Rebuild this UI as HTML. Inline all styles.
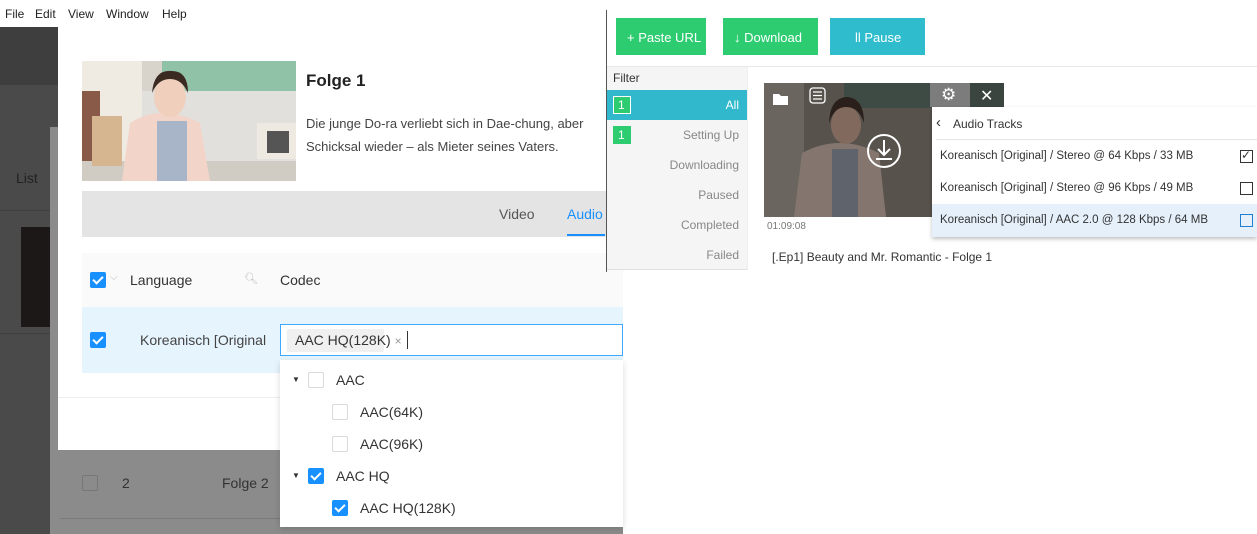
<!DOCTYPE html>
<html><head><meta charset="utf-8"><style>
*{margin:0;padding:0;box-sizing:border-box}
body{width:1257px;height:534px;overflow:hidden;position:relative;background:#fff;font-family:"Liberation Sans",sans-serif;color:#333}
.a{position:absolute}
.t{position:absolute;white-space:nowrap}
.cb{position:absolute;width:16px;height:16px;border-radius:2px;background:#1890ff}
.cb:after{content:"";position:absolute;left:5px;top:2px;width:4px;height:8px;border:solid #fff;border-width:0 2px 2px 0;transform:rotate(45deg)}
.ce{position:absolute;width:16px;height:16px;border:1px solid #d9d9d9;border-radius:2px;background:#fff}
</style></head><body>
<div class="a" style="left:0;top:0;width:606px;height:27px;background:#fff"></div>
<div class="t" style="left:5px;top:7px;font-size:12px;color:#222">File</div>
<div class="t" style="left:35px;top:7px;font-size:12px;color:#222">Edit</div>
<div class="t" style="left:68px;top:7px;font-size:12px;color:#222">View</div>
<div class="t" style="left:106px;top:7px;font-size:12px;color:#222">Window</div>
<div class="t" style="left:162px;top:7px;font-size:12px;color:#222">Help</div>
<div class="a" style="left:0;top:27px;width:606px;height:58px;background:#3e3e3e"></div>
<div class="a" style="left:0;top:85px;width:606px;height:449px;background:#4a4a4a"></div>
<div class="a" style="left:0;top:210px;width:50px;height:1px;background:#3f3f3f"></div>
<div class="a" style="left:0;top:333px;width:50px;height:1px;background:#3f3f3f"></div>
<div class="t" style="left:16px;top:170px;font-size:14px;color:#222">List</div>
<div class="a" style="left:21px;top:227px;width:29px;height:100px;background:#1c1818"></div>
<div class="a" style="left:50px;top:127px;width:573px;height:407px;background:#8b8b8b"></div>
<div class="ce" style="left:82px;top:475px;background:#8b8b8b;border-color:#777"></div>
<div class="t" style="left:122px;top:475px;font-size:14px;color:#333">2</div>
<div class="t" style="left:222px;top:475px;font-size:14px;color:#333">Folge 2</div>
<div class="a" style="left:60px;top:518px;width:563px;height:1px;background:#7a7a7a"></div>
<div class="a" style="left:58px;top:27px;width:548px;height:423px;background:#fff"></div>
<svg class="a" style="left:82px;top:61px" width="214" height="120" viewBox="0 0 214 120">
<rect width="214" height="120" fill="#d8d4cc"/>
<rect x="0" y="0" width="60" height="120" fill="#efebe3"/>
<rect x="0" y="30" width="18" height="90" fill="#8a5a48"/>
<rect x="80" y="0" width="134" height="30" fill="#8fc2a6"/>
<rect x="60" y="30" width="154" height="70" fill="#e2e0dc"/>
<rect x="175" y="62" width="40" height="36" fill="#eeeae2"/>
<rect x="185" y="70" width="22" height="22" fill="#555"/>
<rect x="0" y="100" width="214" height="20" fill="#d0ccc4"/>
<rect x="10" y="55" width="30" height="50" fill="#d6b690"/>
<path d="M40 120 L48 62 Q80 42 118 62 L128 120Z" fill="#f2d4c8"/>
<rect x="75" y="60" width="30" height="60" fill="#a8b4c8"/>
<ellipse cx="88" cy="36" rx="16" ry="20" fill="#f0d0bc"/>
<path d="M70 32 Q72 8 90 10 Q106 10 106 32 Q100 18 88 18 Q76 18 70 32Z" fill="#3a2a22"/>
</svg>
<div class="t" style="left:306px;top:71px;font-size:17px;font-weight:bold;color:#222">Folge 1</div>
<div class="t" style="left:306px;top:112px;font-size:13px;color:#444;line-height:23px">Die junge Do-ra verliebt sich in Dae-chung, aber<br>Schicksal wieder – als Mieter seines Vaters.</div>
<div class="a" style="left:82px;top:191px;width:524px;height:46px;background:#e4e4e4"></div>
<div class="t" style="left:499px;top:206px;font-size:14px;color:#555">Video</div>
<div class="t" style="left:567px;top:206px;font-size:14px;color:#1890ff">Audio</div>
<div class="a" style="left:567px;top:234px;width:38px;height:2px;background:#1890ff"></div>
<div class="a" style="left:82px;top:253px;width:541px;height:54px;background:#fafafa"></div>
<div class="cb" style="left:90px;top:272px"></div>
<div class="t" style="left:110px;top:272px;font-size:10px;color:#bbb">⌵</div>
<div class="t" style="left:130px;top:272px;font-size:14px;color:#333">Language</div>
<div class="t" style="left:244px;top:272px;font-size:11px;color:#bbb">🔍︎</div>
<div class="t" style="left:280px;top:272px;font-size:14px;color:#333">Codec</div>
<div class="a" style="left:82px;top:307px;width:541px;height:66px;background:#e6f4fd"></div>
<div class="cb" style="left:90px;top:332px"></div>
<div class="t" style="left:140px;top:332px;font-size:14px;color:#444">Koreanisch [Original</div>
<div class="a" style="left:280px;top:324px;width:343px;height:32px;border:1px solid #40a9ff;background:#fff"></div>
<div class="a" style="left:287px;top:329px;width:97px;height:23px;background:#f0f0f0;border-radius:2px"></div>
<div class="t" style="left:295px;top:332px;font-size:14px;color:#333">AAC HQ(128K) <span style="color:#999;font-size:12px">×</span></div>
<div class="a" style="left:407px;top:331px;width:1px;height:18px;background:#333"></div>
<div class="a" style="left:58px;top:397px;width:548px;height:1px;background:#eee"></div>
<div class="a" style="left:280px;top:360px;width:343px;height:167px;background:#fff;box-shadow:0 2px 6px rgba(0,0,0,.15)"></div>
<div class="t" style="left:292px;top:375px;font-size:8px;color:#333">▼</div>
<div class="ce" style="left:308px;top:372px"></div>
<div class="t" style="left:336px;top:372px;font-size:14px;color:#333">AAC</div>
<div class="ce" style="left:332px;top:404px"></div>
<div class="t" style="left:360px;top:404px;font-size:14px;color:#333">AAC(64K)</div>
<div class="ce" style="left:332px;top:436px"></div>
<div class="t" style="left:360px;top:436px;font-size:14px;color:#333">AAC(96K)</div>
<div class="t" style="left:292px;top:471px;font-size:8px;color:#333">▼</div>
<div class="cb" style="left:308px;top:468px"></div>
<div class="t" style="left:336px;top:468px;font-size:14px;color:#333">AAC HQ</div>
<div class="cb" style="left:332px;top:500px"></div>
<div class="t" style="left:360px;top:500px;font-size:14px;color:#333">AAC HQ(128K)</div>
<div class="a" style="left:606px;top:10px;width:1px;height:262px;background:#555"></div>
<div class="a" style="left:616px;top:18px;width:90px;height:37px;background:#2ecc71"></div>
<div class="t" style="left:627px;top:30px;font-size:13px;color:#fff">+ Paste URL</div>
<div class="a" style="left:723px;top:18px;width:95px;height:37px;background:#2ecc71"></div>
<div class="t" style="left:734px;top:30px;font-size:13px;color:#fff">↓ Download</div>
<div class="a" style="left:830px;top:18px;width:95px;height:37px;background:#2fbccd"></div>
<div class="t" style="left:855px;top:30px;font-size:13px;color:#fff">ll Pause</div>
<div class="a" style="left:607px;top:66px;width:650px;height:1px;background:#e8e8e8"></div>
<div class="a" style="left:607px;top:67px;width:140px;height:203px;background:#f5f5f5;border-bottom:1px solid #e0e0e0"></div>
<div class="a" style="left:747px;top:67px;width:1px;height:203px;background:#eee"></div>
<div class="t" style="left:613px;top:71px;font-size:12px;color:#333">Filter</div>
<div class="a" style="left:607px;top:90px;width:140px;height:30px;background:#31b8cc"></div>
<div class="a" style="left:613px;top:96px;width:18px;height:18px;background:#2ecc71;border:1px solid #fff"></div>
<div class="t" style="left:618px;top:98px;font-size:12px;color:#fff">1</div>
<div class="t" style="right:518px;top:98px;font-size:12px;color:#fff">All</div>
<div class="a" style="left:613px;top:126px;width:18px;height:18px;background:#2ecc71"></div>
<div class="t" style="left:618px;top:128px;font-size:12px;color:#fff">1</div>
<div class="t" style="right:518px;top:128px;font-size:12px;color:#888">Setting Up</div>
<div class="t" style="right:518px;top:158px;font-size:12px;color:#888">Downloading</div>
<div class="t" style="right:518px;top:188px;font-size:12px;color:#888">Paused</div>
<div class="t" style="right:518px;top:218px;font-size:12px;color:#888">Completed</div>
<div class="t" style="right:518px;top:248px;font-size:12px;color:#888">Failed</div>
<svg class="a" style="left:764px;top:83px" width="168" height="134" viewBox="0 0 168 134">
<rect width="168" height="134" fill="#57524c"/>
<rect x="0" y="0" width="40" height="134" fill="#6a655e"/>
<rect x="80" y="0" width="88" height="25" fill="#3e4a44"/>
<path d="M30 134 L38 70 Q75 50 115 70 L122 134Z" fill="#84766f"/>
<rect x="68" y="66" width="26" height="68" fill="#5e636c"/>
<ellipse cx="82" cy="42" rx="15" ry="19" fill="#82695e"/>
<path d="M65 40 Q66 14 84 14 Q100 16 100 40 Q95 24 82 24 Q70 24 65 40Z" fill="#2a1f1a"/>
<circle cx="120" cy="68" r="16" fill="none" stroke="#fff" stroke-width="2"/>
<path d="M120 57 V72 M114 66 L120 72 L126 66 M112 76 H128" stroke="#fff" stroke-width="2" fill="none"/>
<path d="M9 11 H15 L17 13 H24 V22 H9Z" fill="#fff"/>
<rect x="46" y="5" width="15" height="15" rx="3" fill="none" stroke="#fff" stroke-width="1.3"/>
<path d="M49 9 H58 M49 12.5 H58 M49 16 H58" stroke="#fff" stroke-width="1.2"/>
</svg>
<div class="a" style="left:930px;top:83px;width:40px;height:24px;background:#7c7c7c"></div>
<div class="t" style="left:941px;top:85px;font-size:17px;color:#fff">⚙</div>
<div class="a" style="left:970px;top:83px;width:34px;height:24px;background:#3b453f"></div>
<div class="t" style="left:980px;top:86px;font-size:16px;color:#fff">✕</div>
<div class="t" style="left:767px;top:221px;font-size:10px;color:#777">01:09:08</div>
<div class="t" style="left:772px;top:250px;font-size:12px;color:#333">[.Ep1] Beauty and Mr. Romantic - Folge 1</div>
<div class="a" style="left:932px;top:107px;width:325px;height:130px;background:#fff;box-shadow:0 2px 4px rgba(0,0,0,.25)"></div>
<div class="t" style="left:936px;top:114px;font-size:15px;color:#333">‹</div>
<div class="t" style="left:953px;top:117px;font-size:12px;color:#333">Audio Tracks</div>
<div class="a" style="left:936px;top:139px;width:321px;height:1px;background:#e6e6e6"></div>
<div class="t" style="left:940px;top:150px;font-size:11.5px;color:#333">Koreanisch [Original] / Stereo @ 64 Kbps / 33 MB</div>
<div class="a" style="left:1240px;top:150px;width:13px;height:13px;border:1px solid #333"></div>
<div class="t" style="left:1241px;top:148px;font-size:12px;color:#333">✓</div>
<div class="t" style="left:940px;top:182px;font-size:11.5px;color:#333">Koreanisch [Original] / Stereo @ 96 Kbps / 49 MB</div>
<div class="a" style="left:1240px;top:182px;width:13px;height:13px;border:1px solid #333"></div>
<div class="a" style="left:932px;top:204px;width:325px;height:33px;background:#e5f0fa"></div>
<div class="t" style="left:940px;top:214px;font-size:11.5px;color:#333">Koreanisch [Original] / AAC 2.0 @ 128 Kbps / 64 MB</div>
<div class="a" style="left:1240px;top:214px;width:13px;height:13px;border:1px solid #1e7fd0"></div>
</body></html>
